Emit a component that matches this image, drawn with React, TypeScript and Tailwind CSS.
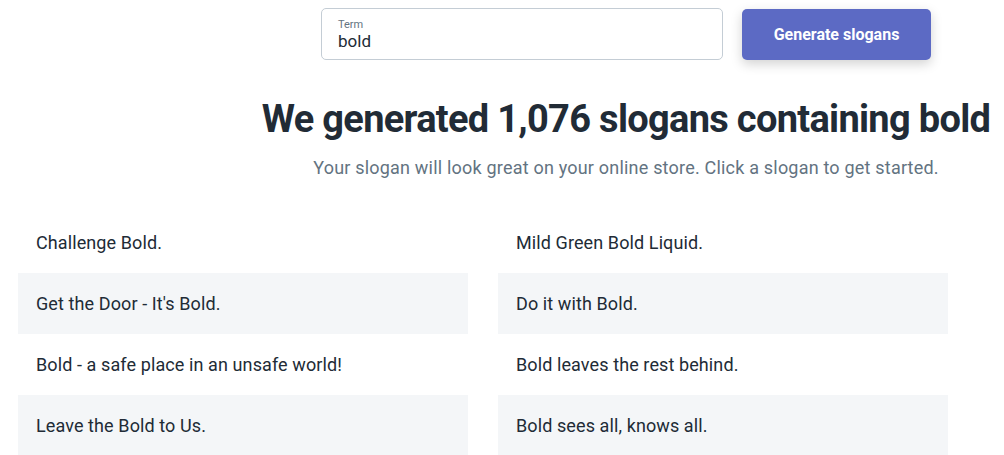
import React from "react";

const left = [
  "Challenge Bold.",
  "Get the Door - It's Bold.",
  "Bold - a safe place in an unsafe world!",
  "Leave the Bold to Us.",
];
const right = [
  "Mild Green Bold Liquid.",
  "Do it with Bold.",
  "Bold leaves the rest behind.",
  "Bold sees all, knows all.",
];

function Column({ items }: { items: string[] }) {
  return (
    <div className="flex w-[450px] flex-col">
      {items.map((s, i) => (
        <div
          key={s}
          className={`flex h-[61px] items-center px-[18px] text-[18px] tracking-[0.1px] text-[#212b36] ${
            i % 2 === 1 ? "bg-[#f4f6f8]" : "bg-white"
          }`}
        >
          {s}
        </div>
      ))}
    </div>
  );
}

export default function App() {
  return (
    <div
      className="h-[455px] w-[1004px] overflow-hidden bg-white"
      style={{ fontFamily: "Roboto, 'Noto Sans', sans-serif" }}
    >
      <div className="ml-[262px] flex w-[728px] flex-col items-center">
        <div className="mt-[8px] flex w-[610px] items-start gap-[19px]">
          <div className="flex h-[52px] w-[402px] flex-col justify-center rounded-[5px] border border-[#c4cdd5] px-[16px]">
            <span className="text-[11px] leading-[13px] text-[#637381]">Term</span>
            <span className="text-[17px] leading-[20px] text-[#212b36]">bold</span>
          </div>
          <button className="mt-[1px] h-[51px] w-[189px] rounded-[5px] bg-[#5c6ac4] text-[16px] font-bold text-white shadow-[0_4px_12px_rgba(0,0,0,0.18)]">
            Generate slogans
          </button>
        </div>
        <h1 className="mt-[35px] whitespace-nowrap text-[38px] font-bold leading-[48px] tracking-[-0.7px] text-[#212b36]">
          We generated 1,076 slogans containing bold
        </h1>
        <p className="mt-[13px] whitespace-nowrap text-[18px] leading-[24px] tracking-[0.2px] text-[#637381]">
          Your slogan will look great on your online store. Click a slogan to get started.
        </p>
      </div>
      <div className="ml-[18px] mt-[32px] flex gap-[30px]">
        <Column items={left} />
        <Column items={right} />
      </div>
    </div>
  );
}
